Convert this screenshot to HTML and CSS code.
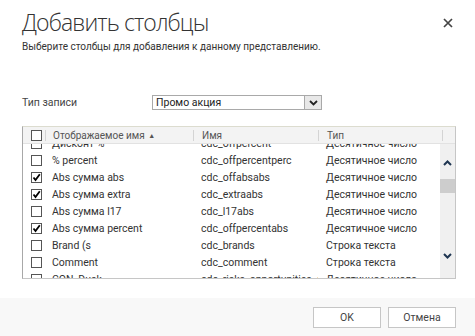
FILE: index.html
```html
<!DOCTYPE html>
<html lang="ru">
<head>
    <meta charset="UTF-8">
    <title>Добавить столбцы</title>
    <link rel="stylesheet" href="styles.css">
</head>
<body>

    <div class="dialog">
        <div class="head">
            <h1 class="title">Добавить столбцы</h1>
            <button class="close" type="button">
                <svg width="10" height="10" viewBox="0 0 10 10"><path d="M1 1 L9 9 M9 1 L1 9" stroke="#444" stroke-width="1.7"/></svg>
            </button>
            <p class="subtitle">Выберите столбцы для добавления к данному представлению.</p>
        </div>

        <div class="field">
            <label class="field-label">Тип записи</label>
            <div class="select">
                <span class="select-value">Промо акция</span>
                <span class="select-btn">
                    <svg width="9" height="6" viewBox="0 0 9 6"><path d="M1 1 L4.5 4.5 L8 1" fill="none" stroke="#222" stroke-width="1.8"/></svg>
                </span>
            </div>
        </div>

        <div class="grid">
            <div class="grid-head">
                <span class="hcell cb-cell"><i class="cb"></i></span>
                <span class="hcell sep">Отображаемое имя <span class="sort">▲</span></span>
                <span class="hcell sep">Имя</span>
                <span class="hcell sep">Тип</span>
                <span class="hcell sep"></span>
            </div>
            <div class="grid-body">
                <div class="rows">
                    <div class="row"><span class="cb-cell"><i class="cb"></i></span><span>Дисконт %</span><span>cdc_offpercent</span><span>Десятичное число</span></div>
                    <div class="row"><span class="cb-cell"><i class="cb"></i></span><span>% percent</span><span>cdc_offpercentperc</span><span>Десятичное число</span></div>
                    <div class="row"><span class="cb-cell"><i class="cb on"></i></span><span>Abs сумма abs</span><span>cdc_offabsabs</span><span>Десятичное число</span></div>
                    <div class="row"><span class="cb-cell"><i class="cb on"></i></span><span>Abs сумма extra</span><span>cdc_extraabs</span><span>Десятичное число</span></div>
                    <div class="row"><span class="cb-cell"><i class="cb"></i></span><span>Abs сумма l17</span><span>cdc_l17abs</span><span>Десятичное число</span></div>
                    <div class="row"><span class="cb-cell"><i class="cb on"></i></span><span>Abs сумма percent</span><span>cdc_offpercentabs</span><span>Десятичное число</span></div>
                    <div class="row"><span class="cb-cell"><i class="cb"></i></span><span>Brand (s</span><span>cdc_brands</span><span>Строка текста</span></div>
                    <div class="row"><span class="cb-cell"><i class="cb"></i></span><span>Comment</span><span>cdc_comment</span><span>Строка текста</span></div>
                    <div class="row"><span class="cb-cell"><i class="cb"></i></span><span>CON_Dusk</span><span>cdc_risks_opportunities_con</span><span>Десятичное число</span></div>
                </div>
                <div class="scrollbar">
                    <svg class="arrow-up" width="9" height="6" viewBox="0 0 9 6"><path d="M1 5 L4.5 1.5 L8 5" fill="none" stroke="#1f3652" stroke-width="2"/></svg>
                    <span class="thumb"></span>
                    <svg class="arrow-down" width="9" height="6" viewBox="0 0 9 6"><path d="M1 1 L4.5 4.5 L8 1" fill="none" stroke="#1f3652" stroke-width="2"/></svg>
                </div>
            </div>
        </div>

        <div class="foot">
            <button class="btn" type="button">OK</button>
            <button class="btn" type="button">Отмена</button>
        </div>
    </div>

</body>
</html>
```

FILE: styles.css
```css
body {
    margin: 0;
    font-family: Roboto, "Open Sans", sans-serif;
    color: #444;
    background: #fff;
}
.dialog {
    width: 475px;
    height: 336px;
    display: flex;
    flex-direction: column;
    overflow: hidden;
}
.head {
    position: relative;
    padding: 6px 22px 0;
}
.title {
    margin: 0;
    font-family: "Open Sans", sans-serif;
    font-size: 23px;
    font-weight: 300;
    line-height: 32px;
    color: #333;
    letter-spacing: -0.9px;
}
.close {
    position: absolute;
    top: 17px;
    right: 21px;
    width: 12px;
    height: 12px;
    padding: 0;
    border: none;
    background: none;
    display: flex;
    align-items: center;
    justify-content: center;
}
.subtitle {
    margin: 2px 0 0;
    font-size: 10px;
    line-height: 14px;
    color: #333;
}
.field {
    display: flex;
    align-items: center;
    margin: 41px 0 0 22px;
    height: 15px;
}
.field-label {
    width: 130px;
    font-size: 10.5px;
}
.select {
    width: 170px;
    height: 15px;
    box-sizing: border-box;
    border: 1px solid #a9a9a9;
    display: flex;
    align-items: center;
}
.select-value {
    flex: 1;
    padding-left: 3px;
    font-size: 10.5px;
    color: #222;
}
.select-btn {
    width: 16px;
    height: 13px;
    border-left: 1px solid #a9a9a9;
    background: #e8e8e8;
    display: flex;
    align-items: center;
    justify-content: center;
}
.grid {
    margin: 16px 0 0 22px;
    width: 434px;
    height: 153px;
    box-sizing: border-box;
    border: 1px solid #c6c6c6;
    border-left-color: #a8a8a8;
    border-top-color: #dcdccf;
    display: flex;
    flex-direction: column;
    overflow: hidden;
}
.grid-head {
    display: grid;
    grid-template-columns: 22px 148px 125px 124px 1fr;
    align-items: center;
    height: 16px;
    flex-shrink: 0;
    background: #f3f3f3;
    border-bottom: 1px solid #e2e2e2;
    font-size: 10px;
    color: #555;
}
.hcell {
    height: 11px;
    line-height: 11px;
    white-space: nowrap;
}
.sep {
    border-left: 1px solid #d4d4d4;
    padding-left: 7px;
}
.hcell.sep + .hcell.sep {
    padding-left: 8px;
}
.sort {
    font-size: 7px;
    vertical-align: 1px;
    color: #555;
    margin-left: 1px;
}
.cb-cell {
    padding-left: 8px;
    display: flex;
    align-items: center;
}
.cb {
    display: block;
    width: 11px;
    height: 11px;
    box-sizing: border-box;
    border: 1px solid #555;
    background: #fff;
}
.cb.on {
    background: #fff url("data:image/svg+xml;utf8,<svg xmlns='http://www.w3.org/2000/svg' width='9' height='9' viewBox='0 0 9 9'><path d='M1.5 4.5 L3.5 7 L7.8 1.2' fill='none' stroke='%23000' stroke-width='1.8'/></svg>") no-repeat center;
}
.grid-body {
    flex: 1;
    display: flex;
    overflow: hidden;
}
.rows {
    flex: 1;
    margin-top: -9px;
}
.row {
    display: grid;
    grid-template-columns: 22px 148px 125px 1fr;
    align-items: center;
    height: 17px;
    font-size: 10.5px;
    color: #333;
    white-space: nowrap;
}
.row span + span {
    padding-left: 8px;
    overflow: hidden;
}
.row span:nth-child(2) {
    padding-left: 7px;
}
.scrollbar {
    width: 15px;
    background: #f0f0f0;
    display: flex;
    flex-direction: column;
    align-items: center;
}
.arrow-up {
    margin-top: 16px;
}
.thumb {
    width: 15px;
    height: 14px;
    margin-top: 13px;
    background: #cdcdcd;
}
.arrow-down {
    margin-top: auto;
    margin-bottom: 19px;
}
.foot {
    margin-top: auto;
    height: 38px;
    background: #f8f8f8;
    display: flex;
    justify-content: flex-end;
    align-items: center;
    gap: 7px;
    padding-right: 19px;
    padding-top: 1px;
    box-sizing: border-box;
}
.btn {
    width: 68px;
    height: 21px;
    border: 1px solid #c6c6c6;
    background: #fff;
    font-family: inherit;
    font-size: 10.5px;
    color: #444;
}
```
